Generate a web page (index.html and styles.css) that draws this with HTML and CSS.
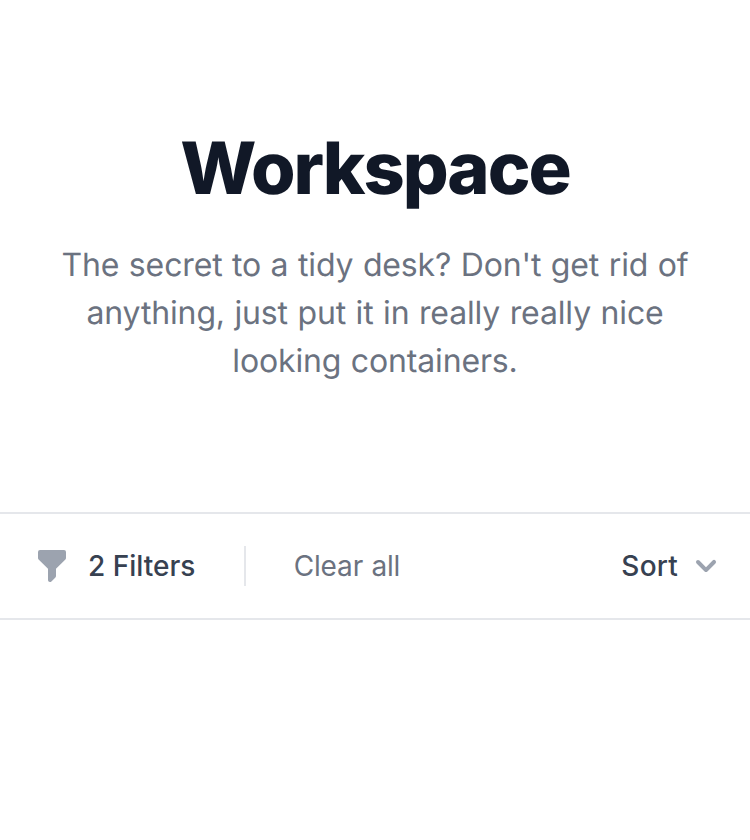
FILE: index.html
```html
<!DOCTYPE html>
<html lang="en">
<head>
<meta charset="utf-8">
<title>Workspace</title>
<link rel="stylesheet" href="styles.css">
</head>
<body>
<main>
  <header class="intro">
    <h1 class="title">Workspace</h1>
    <p class="lead">The secret to a tidy desk? Don't get rid of anything, just put it in really really nice looking containers.</p>
  </header>
  <section class="toolbar" aria-label="Filters">
    <button class="filters" type="button">
      <svg class="funnel" viewBox="0 0 20 20" fill="currentColor" aria-hidden="true"><path fill-rule="evenodd" clip-rule="evenodd" d="M3 3a1 1 0 011-1h12a1 1 0 011 1v3a1 1 0 01-.293.707L12 11.414V15a1 1 0 01-.293.707l-2 2A1 1 0 018 17v-5.586L3.293 6.707A1 1 0 013 6V3z"/></svg>
      2 Filters
    </button>
    <div class="clear-wrap"><button class="clear" type="button">Clear all</button></div>
    <button class="sort" type="button">
      Sort
      <svg class="chevron" viewBox="0 0 20 20" fill="currentColor" aria-hidden="true"><path fill-rule="evenodd" clip-rule="evenodd" d="M5.293 7.293a1 1 0 011.414 0L10 10.586l3.293-3.293a1 1 0 111.414 1.414l-4 4a1 1 0 01-1.414 0l-4-4a1 1 0 010-1.414z"/></svg>
    </button>
  </section>
</main>
</body>
</html>
```

FILE: styles.css
```css
* { box-sizing: border-box; }

body {
  margin: 0;
  background: #fff;
  font-family: Inter, "Liberation Sans", sans-serif;
  color: #111827;
  text-rendering: geometricPrecision;
}

.intro {
  padding: 129px 32px 127px;
  text-align: center;
}

.title {
  margin: 0;
  font-size: 72px;
  line-height: 80px;
  font-weight: 800;
  letter-spacing: -0.028em;
}

.lead {
  margin: 32px auto 0;
  font-size: 32px;
  line-height: 48px;
  letter-spacing: -0.14px;
  word-spacing: 0.67px;
  color: #6b7280;
}

.toolbar {
  display: flex;
  align-items: center;
  height: 108px;
  padding: 0 32px;
  border-top: 2px solid #e5e7eb;
  border-bottom: 2px solid #e5e7eb;
  font-size: 28px;
  line-height: 40px;
}

button {
  display: flex;
  align-items: center;
  padding: 0;
  border: 0;
  background: none;
  font: inherit;
}

.filters {
  color: #374151;
  font-weight: 500;
}

.funnel {
  width: 40px;
  height: 40px;
  margin-right: 16px;
  color: #9ca3af;
}

.clear-wrap {
  margin-left: 49px;
  padding-left: 47.3px;
  border-left: 2px solid #e5e7eb;
}

.clear {
  color: #6b7280;
  letter-spacing: -0.14px;
  word-spacing: 0.6px;
}

.sort {
  margin-left: auto;
  margin-right: -8px;
  color: #374151;
  font-weight: 500;
  letter-spacing: 0.2px;
}

.chevron {
  width: 40px;
  height: 40px;
  margin-left: 8px;
  color: #9ca3af;
}
```
